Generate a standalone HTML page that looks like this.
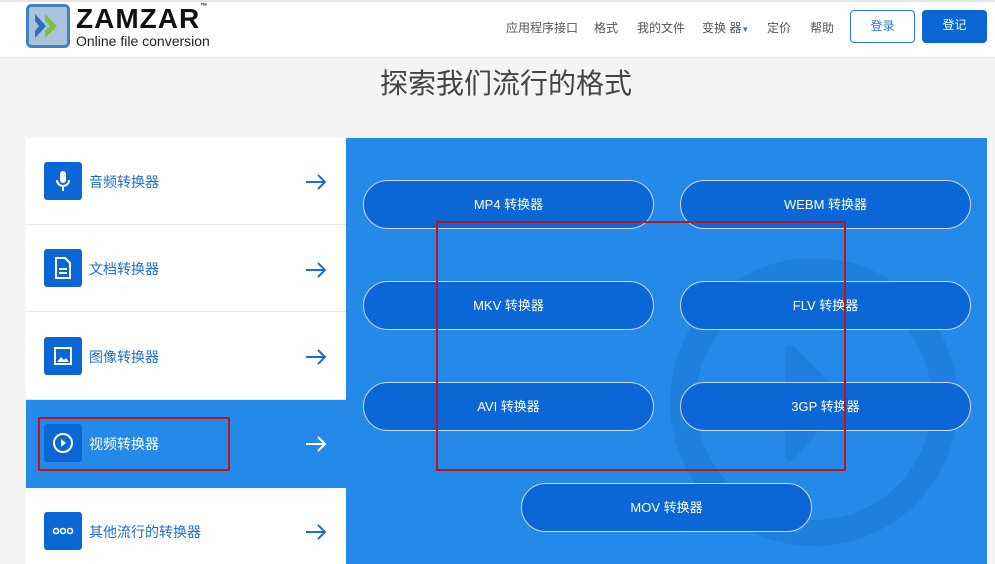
<!DOCTYPE html>
<html><head><meta charset="utf-8"><style>
*{margin:0;padding:0;box-sizing:border-box}
html,body{width:995px;height:564px;overflow:hidden}
body{background:#f4f4f4;font-family:"Liberation Sans","Noto Sans CJK SC",sans-serif;position:relative}
.hdr{position:absolute;left:0;top:0;width:995px;height:58px;background:#fff;border-top:2px solid #e6e6e6;border-bottom:1px solid #eaeaea}
.nav{position:absolute;top:17px;font-size:12px;color:#555}
.btn{position:absolute;top:8px;height:33px;border-radius:4px;font-size:12px;text-align:center;line-height:31px}
h1{position:absolute;top:62px;left:0;width:1012px;text-align:center;font-size:28px;font-weight:normal;color:#444}
.left{position:absolute;left:26px;top:138px;width:320px;height:426px;background:#fff}
.row{position:absolute;left:0;width:320px;height:87px;border-bottom:1px solid #e8e8e8}
.ic{position:absolute;left:18px;top:24px;width:38px;height:38px;background:#0b66d6;border-radius:3px}
.lab{position:absolute;left:63px;top:34px;font-size:14px;color:#1a6fd1}
.arr{position:absolute;left:279px;top:34px}
.panel{position:absolute;left:346px;top:138px;width:641px;height:426px;background:#2589ea;overflow:hidden}
.pb{position:absolute;width:291px;height:49px;border:1px solid #c7dcf5;border-radius:25px;background:#0b66d6;color:#fff;font-size:13px;text-align:center;line-height:47px}
.red{position:absolute;border:2px solid #c0141a}
</style></head><body>
<div class="hdr">
<svg style="position:absolute;left:26px;top:2px" width="44" height="44" viewBox="0 0 44 44"><rect x="1.5" y="1.5" width="41" height="41" rx="4" fill="#a9c3dc" stroke="#3f82c8" stroke-width="3"/><polygon points="9,10 20,22 9,34 9,27 13,22 9,17" fill="#2a6fc0"/><polygon points="19,10 31,22 19,34 19,27 24,22 19,17" fill="#7fc234"/></svg>
<div style="position:absolute;left:76px;top:1px;font-size:28px;font-weight:bold;color:#111;letter-spacing:1px">ZAMZAR<span style="font-size:7px;vertical-align:top">™</span></div>
<div style="position:absolute;left:76px;top:31px;font-size:14px;color:#222">Online file conversion</div>
<div class="nav" style="left:506px">应用程序接口</div>
<div class="nav" style="left:594px">格式</div>
<div class="nav" style="left:637px">我的文件</div>
<div class="nav" style="left:702px">变换 器<span style="font-size:8px;color:#2a7be0">▼</span></div>
<div class="nav" style="left:767px">定价</div>
<div class="nav" style="left:810px">帮助</div>
<div class="btn" style="left:850px;width:65px;border:1px solid #2a7be0;color:#2a7be0;background:#fff">登录</div>
<div class="btn" style="left:922px;width:65px;background:#0b66d6;color:#fff">登记</div>
</div>
<h1>探索我们流行的格式</h1>
<div class="left">
<div class="row" style="top:0"><div class="ic"><svg width="38" height="38" viewBox="0 0 38 38"><rect x="16" y="9" width="6" height="12" rx="3" fill="#fff"/><path d="M13 18a6 6 0 0 0 12 0M19 24v5" stroke="#fff" stroke-width="2" fill="none"/></svg></div><div class="lab">音频转换器</div></div>
<div class="row" style="top:87px"><div class="ic"><svg width="38" height="38" viewBox="0 0 38 38"><path d="M12 9h9l5 5v15h-14z" fill="none" stroke="#fff" stroke-width="2"/><path d="M15 20h8M15 24h8" stroke="#fff" stroke-width="2"/></svg></div><div class="lab">文档转换器</div></div>
<div class="row" style="top:175px"><div class="ic"><svg width="38" height="38" viewBox="0 0 38 38"><rect x="11" y="11" width="16" height="16" fill="none" stroke="#fff" stroke-width="2"/><path d="M13 25l4-5 3 3 2-2 3 4z" fill="#fff"/></svg></div><div class="lab">图像转换器</div></div>
<div class="row" style="top:262px;background:#2589ea;border:none;height:88px"><div class="ic"><svg width="38" height="38" viewBox="0 0 38 38"><circle cx="19" cy="19" r="9" fill="none" stroke="#fff" stroke-width="2"/><path d="M17 15l5 4-5 4z" fill="#fff"/></svg></div><div class="lab" style="color:#fff">视频转换器</div><svg class="arr" width="22" height="20" viewBox="0 0 22 20"><path d="M1 10h19M13 3l7 7-7 7" stroke="#fff" stroke-width="2" fill="none"/></svg></div>
<div class="row" style="top:350px;border:none"><div class="ic"><svg width="38" height="38" viewBox="0 0 38 38"><circle cx="12" cy="19" r="2.5" fill="none" stroke="#fff" stroke-width="1.6"/><circle cx="19" cy="19" r="2.5" fill="none" stroke="#fff" stroke-width="1.6"/><circle cx="26" cy="19" r="2.5" fill="none" stroke="#fff" stroke-width="1.6"/></svg></div><div class="lab">其他流行的转换器</div></div>
<svg class="arr" style="top:34px" width="22" height="20" viewBox="0 0 22 20"><path d="M1 10h19M13 3l7 7-7 7" stroke="#1a6fd1" stroke-width="2" fill="none"/></svg>
<svg class="arr" style="top:122px" width="22" height="20" viewBox="0 0 22 20"><path d="M1 10h19M13 3l7 7-7 7" stroke="#1a6fd1" stroke-width="2" fill="none"/></svg>
<svg class="arr" style="top:209px" width="22" height="20" viewBox="0 0 22 20"><path d="M1 10h19M13 3l7 7-7 7" stroke="#1a6fd1" stroke-width="2" fill="none"/></svg>
<svg class="arr" style="top:384px" width="22" height="20" viewBox="0 0 22 20"><path d="M1 10h19M13 3l7 7-7 7" stroke="#1a6fd1" stroke-width="2" fill="none"/></svg>
</div>
<div class="panel">
<svg style="position:absolute;left:0;top:0" width="641" height="426"><circle cx="468" cy="264" r="131" fill="none" stroke="#1f7fdf" stroke-width="26"/><path d="M444 212l50 50-50 56z" fill="#1f7fdf" stroke="#1f7fdf" stroke-width="10" stroke-linejoin="round"/></svg>
<div class="pb" style="left:17px;top:42px">MP4 转换器</div>
<div class="pb" style="left:334px;top:42px">WEBM 转换器</div>
<div class="pb" style="left:17px;top:143px">MKV 转换器</div>
<div class="pb" style="left:334px;top:143px">FLV 转换器</div>
<div class="pb" style="left:17px;top:244px">AVI 转换器</div>
<div class="pb" style="left:334px;top:244px">3GP 转换器</div>
<div class="pb" style="left:175px;top:345px">MOV 转换器</div>
</div>
<div class="red" style="left:38px;top:417px;width:192px;height:54px"></div>
<div class="red" style="left:436px;top:221px;width:410px;height:250px"></div>
</body></html>
